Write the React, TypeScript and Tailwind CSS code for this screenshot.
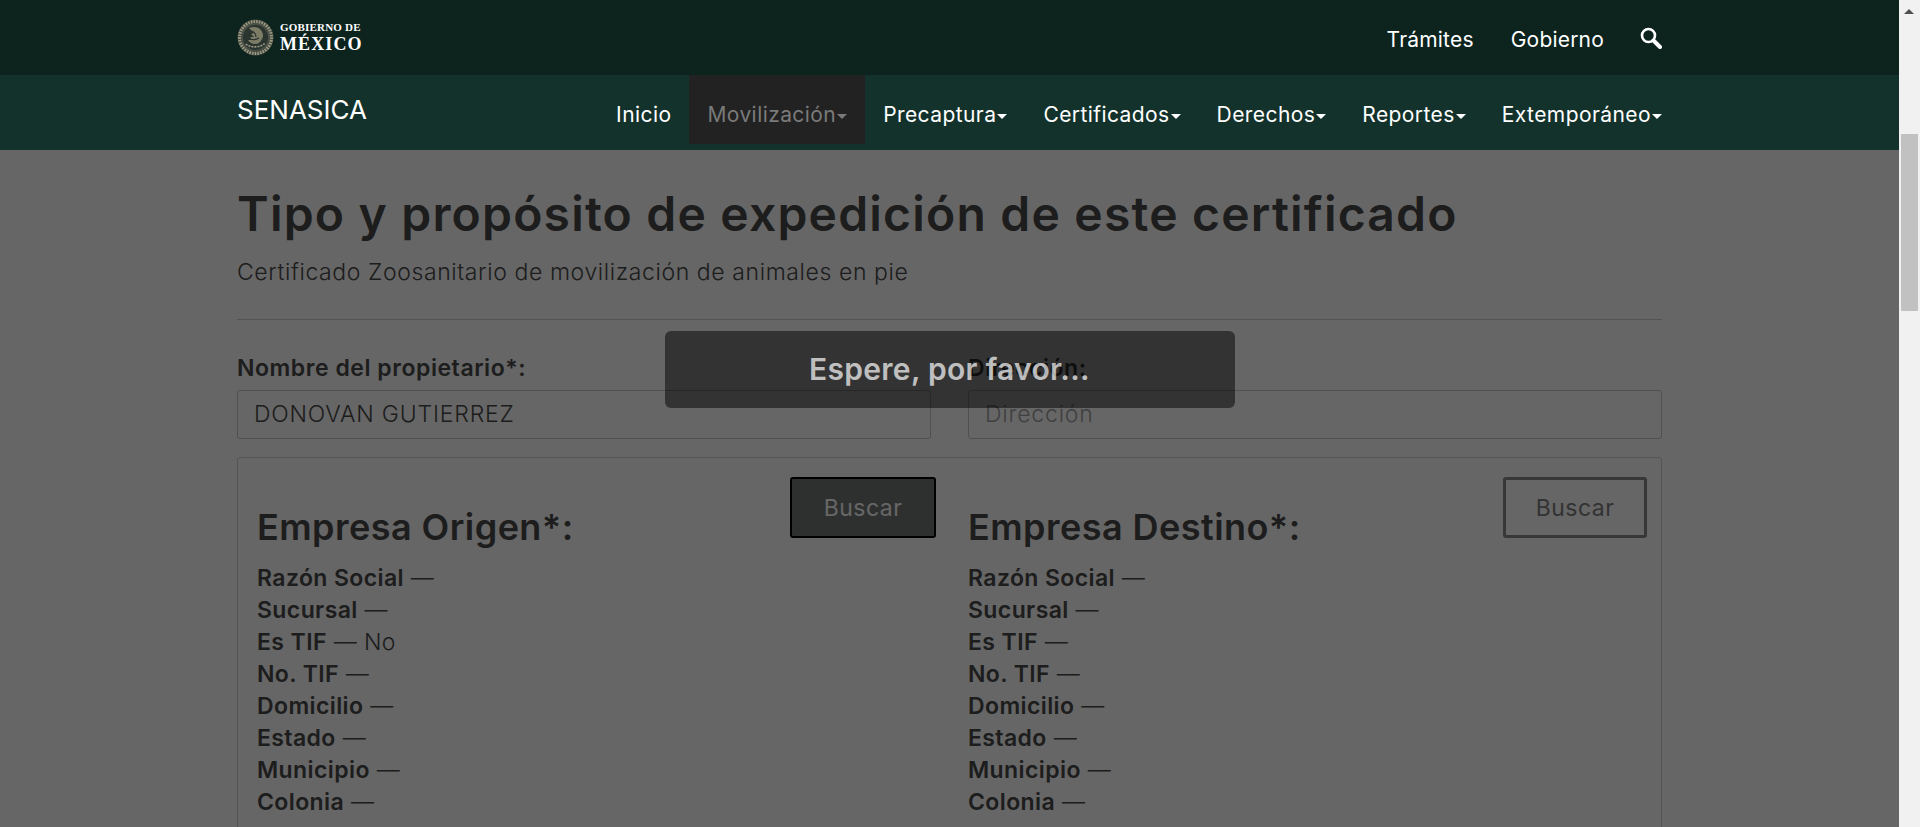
const origen = [
  ["Razón Social", ""],
  ["Sucursal", ""],
  ["Es TIF", "No"],
  ["No. TIF", ""],
  ["Domicilio", ""],
  ["Estado", ""],
  ["Municipio", ""],
  ["Colonia", ""],
];

const destino = origen.map(([label]) => [label, ""]);

const menu = ["Precaptura", "Certificados", "Derechos", "Reportes", "Extemporáneo"];

function Caret() {
  return <span className="ml-[1px] mt-[3px] inline-block border-x-[5px] border-t-[5px] border-x-transparent border-t-current" />;
}

function Emblem() {
  return (
    <svg width="37" height="37" viewBox="0 0 37 37" className="shrink-0">
      <circle cx="18.5" cy="18.5" r="18" fill="#4a4f45" />
      <circle cx="18.5" cy="18.5" r="16" fill="none" stroke="#9d9b84" strokeWidth="3" strokeDasharray="1.5 1.2" />
      <circle cx="18.5" cy="18.5" r="12.5" fill="#2a3530" />
      <path d="M12 9c4-2 9-1 11 1 3 3 4 7 2 10-1 3-4 5-7 5-3 0-6-2-7-4l4 0-2-3 4 0-3-3 3-1z" fill="#7d7c67" />
      <path d="M15 12c2 1 4 3 4 6M13 20c3 1 6 1 9-1" fill="none" stroke="#2a3530" strokeWidth="1.2" />
      <path d="M9 25c4 4 15 4 19-1" fill="none" stroke="#9d9b84" strokeWidth="1.6" strokeDasharray="2 1" />
    </svg>
  );
}

function Empresa({ title, rows }: { title: string; rows: string[][] }) {
  return (
    <div className="flow-root">
      {title === "Empresa Origen*:" ? (
        <button className="float-right h-[61px] w-[146px] rounded-[3px] border-2 border-black bg-[#747878] pt-[2px] text-[23px] tracking-[0.5px] text-white">
          Buscar
        </button>
      ) : (
        <button className="float-right h-[61px] w-[144px] rounded-[3px] border-[3px] border-[#8a8a8a] pt-[2px] text-[23px] tracking-[0.5px] text-[#808080]">
          Buscar
        </button>
      )}
      <h2 className="mt-[26px] text-[36px] font-semibold leading-[48px] tracking-[0.45px]">{title}</h2>
      <div className="mt-[11px]">
        {rows.map(([label, value]) => (
          <div key={label} className="text-[23px] leading-[32px] tracking-[0.4px]">
            <span className="font-semibold">{label}</span>
            <span className="font-light"> — {value}</span>
          </div>
        ))}
      </div>
    </div>
  );
}

export default function App() {
  return (
    <div className="flex h-[827px] overflow-hidden font-[Inter,sans-serif]">
      <div className="relative w-[1899px] shrink-0 bg-white">
        <div className="bg-[#0c231e]">
          <div className="mx-[237px] flex h-[75px] items-center justify-between">
            <div className="flex items-center gap-[6px]">
              <Emblem />
              <div className="font-['Liberation_Serif',serif] font-bold leading-none text-white">
                <div className="text-[11px] tracking-[0.2px]">GOBIERNO DE</div>
                <div className="mt-[2px] text-[18px] tracking-[1.1px]">MÉXICO</div>
              </div>
            </div>
            <div className="flex items-center text-[21px] tracking-[0.2px] text-white">
              <a className="mt-[4px]">Trámites</a>
              <a className="ml-[37px] mt-[4px]">Gobierno</a>
              <svg width="22" height="22" viewBox="0 0 22 22" className="ml-[36px]" fill="none" stroke="white">
                <circle cx="8.5" cy="8.5" r="6.5" strokeWidth="2.6" />
                <path d="M13.5 13.5 20 20" strokeWidth="4" strokeLinecap="round" />
              </svg>
            </div>
          </div>
        </div>
        <div className="bg-[#13322b]">
          <div className="mx-[237px] flex h-[75px] justify-between">
            <a className="mt-[20px] text-[26px] leading-[30px] text-white">SENASICA</a>
            <div className="flex h-[69px] text-[21px] tracking-[0.42px] text-white">
              <a className="flex items-center px-[18px] pt-[10px]">Inicio</a>
              <a className="flex items-center bg-[#222222] px-[18px] pt-[10px] text-[#7a7a7a]">
                Movilización
                <Caret />
              </a>
              {menu.map((item, i) => (
                <a key={item} className={`flex items-center pl-[18px] pt-[10px] ${i === menu.length - 1 ? "" : "pr-[18px]"}`}>
                  {item}
                  <Caret />
                </a>
              ))}
            </div>
          </div>
        </div>

        <main className="mx-[237px] text-[#4a4a4a]">
          <h1 className="pt-[35px] text-[48px] font-semibold leading-[58px] tracking-[1.2px]">
            Tipo y propósito de expedición de este certificado
          </h1>
          <p className="mt-[15px] text-[23px] font-light leading-[28px] tracking-[0.6px]">
            Certificado Zoosanitario de movilización de animales en pie
          </p>
          <hr className="mt-[33px] border-[#cfcfcf]" />
          <div className="mt-[33px] grid grid-cols-2 gap-x-[37px]">
            <div>
              <label className="block text-[23px] font-semibold leading-[30px] tracking-[0.55px]">Nombre del propietario*:</label>
              <input
                readOnly
                value="DONOVAN GUTIERREZ"
                className="mt-[7px] h-[49px] w-full rounded-[3px] border border-[#c9c9c9] px-[16px] pb-[2px] text-[23px] font-light tracking-[0.8px]"
              />
            </div>
            <div>
              <label className="block text-[23px] font-semibold leading-[30px] tracking-[0.55px]">Dirección:</label>
              <input
                readOnly
                placeholder="Dirección"
                className="mt-[7px] h-[49px] w-full rounded-[3px] border border-[#c9c9c9] px-[16px] pb-[2px] text-[23px] font-light tracking-[0.8px] placeholder:text-[#a0a0a0]"
              />
            </div>
          </div>
          <div className="mt-[18px] grid h-[400px] grid-cols-2 gap-x-[32px] rounded-[3px] border border-[#cfcfcf] pl-[19px] pr-[14px] pt-[19px]">
            <Empresa title="Empresa Origen*:" rows={origen} />
            <Empresa title="Empresa Destino*:" rows={destino} />
          </div>
        </main>

        <div className="absolute inset-x-0 bottom-0 top-[150px] bg-black/60">
          <div className="absolute left-1/2 top-[181px] flex h-[77px] w-[570px] -translate-x-1/2 items-center justify-center rounded-[6px] bg-black/50 text-[30px] font-semibold tracking-[0.3px] text-white/70">
            Espere, por favor...
          </div>
        </div>
      </div>

      <div className="relative w-[21px] shrink-0 bg-[#f1f1f1]">
        <div className="ml-[5px] mt-[9px] h-0 w-0 border-x-[5px] border-b-[5px] border-x-transparent border-b-[#505050]" />
        <div className="absolute left-[2px] top-[134px] h-[177px] w-[17px] bg-[#c1c1c1]" />
      </div>
    </div>
  );
}
